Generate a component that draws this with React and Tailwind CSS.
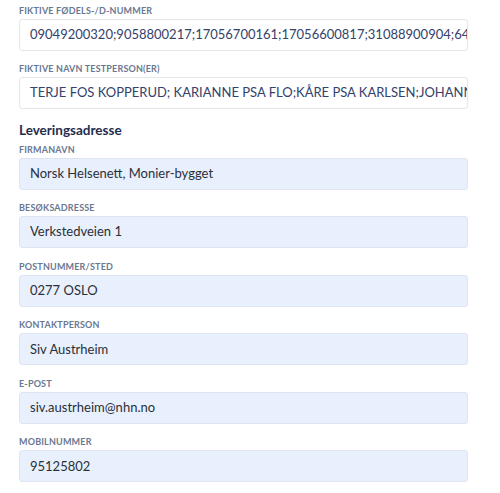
const font = { fontFamily: "Lato, 'Open Sans', sans-serif" };

function Field({ label, value, filled }) {
  return (
    <div className="flex flex-col">
      <label className="text-[9px] leading-[12px] font-bold tracking-[0.02em] uppercase text-[#6b7891] mb-[2px]">
        {label}
      </label>
      <div
        className={
          "h-[32px] rounded-[3px] border px-[10px] flex items-center overflow-hidden whitespace-nowrap text-[13px] " +
          (filled
            ? "bg-[#e8f0fe] border-[#dfe5f0] text-[#2b2f36]"
            : "bg-white border-[#e3e6eb] text-[#34416b]")
        }
      >
        {value}
      </div>
    </div>
  );
}

export default function App() {
  return (
    <div className="min-h-screen bg-white pl-[19px] pr-[32px] pt-[5px]" style={font}>
      <div className="flex flex-col gap-[12px]">
        <Field
          label="Fiktive fødels-/D-nummer"
          value="09049200320;9058800217;17056700161;17056600817;31088900904;64049200320"
        />
        <Field
          label="Fiktive navn testperson(er)"
          value="TERJE FOS KOPPERUD; KARIANNE PSA FLO;KÅRE PSA KARLSEN;JOHANNE PSA OLSEN"
        />
      </div>
      <h2 className="mt-[11.5px] mb-[5px] text-[13.5px] leading-[18px] font-bold text-[#1f2d4e]">
        Leveringsadresse
      </h2>
      <div className="flex flex-col gap-[12.6px]">
        <Field label="Firmanavn" value="Norsk Helsenett, Monier-bygget" filled />
        <Field label="Besøksadresse" value="Verkstedveien 1" filled />
        <Field label="Postnummer/sted" value="0277 OSLO" filled />
        <Field label="Kontaktperson" value="Siv Austrheim" filled />
        <Field label="E-post" value="siv.austrheim@nhn.no" filled />
        <Field label="Mobilnummer" value="95125802" filled />
      </div>
    </div>
  );
}
